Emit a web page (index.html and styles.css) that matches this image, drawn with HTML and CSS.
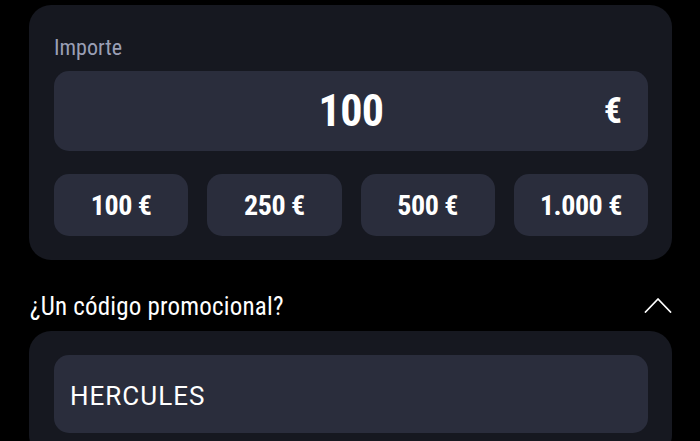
FILE: index.html
```html
<!DOCTYPE html>
<html lang="es">
<head>
<meta charset="utf-8">
<link rel="stylesheet" href="styles.css">
</head>
<body>
<main class="page">
  <section class="card amount-card">
    <div class="label">Importe</div>
    <div class="amount-input">
      <span class="spacer"></span>
      <span class="amount-value">100</span>
      <span class="amount-currency">€</span>
    </div>
    <div class="presets">
      <button class="preset">100 €</button>
      <button class="preset">250 €</button>
      <button class="preset">500 €</button>
      <button class="preset">1.000 €</button>
    </div>
  </section>

  <div class="promo-header">
    <span class="promo-title">¿Un código promocional?</span>
    <svg class="chevron" width="28" height="16" viewBox="0 0 28 16" aria-hidden="true">
      <polyline points="1.5,15 14,2 26.5,15" fill="none" stroke="#ffffff" stroke-width="1.8" stroke-linecap="round" stroke-linejoin="round"/>
    </svg>
  </div>

  <section class="card promo-card">
    <div class="promo-input">HERCULES</div>
  </section>
</main>
</body>
</html>
```
FILE: styles.css
```css
* { box-sizing: border-box; }

html, body {
  margin: 0;
  padding: 0;
  background: #000000;
  height: 100%;
  overflow: hidden;
}

body {
  font-family: "Roboto Condensed", "Roboto", "Liberation Sans", sans-serif;
  color: #ffffff;
}

.page {
  width: 643px;
  margin-left: 29px;
  padding-top: 5px;
}

.card {
  background: #161820;
  border-radius: 22px;
  padding: 0 24px 0 25px;
}

.amount-card {
  padding-top: 28px;
  padding-bottom: 24px;
}

.label {
  font-size: 22px;
  line-height: 30px;
  color: #9a9fb5;
  margin-bottom: 8px;
}

.amount-input {
  height: 80px;
  background: #2a2d3c;
  border-radius: 15px;
  display: grid;
  grid-template-columns: 1fr auto 1fr;
  align-items: center;
  padding: 0 26px 0 26px;
}

.amount-value {
  font-size: 44px;
  font-weight: 700;
  line-height: 1;
  letter-spacing: -0.5px;
}

.amount-currency {
  justify-self: end;
  font-size: 36px;
  font-weight: 700;
  line-height: 1;
}

.presets {
  margin-top: 23px;
  display: grid;
  grid-template-columns: repeat(4, 1fr);
  gap: 19px;
}

.preset {
  height: 62px;
  border: none;
  border-radius: 15px;
  background: #2a2d3c;
  color: #ffffff;
  font-family: inherit;
  font-size: 28px;
  font-weight: 700;
  letter-spacing: -0.5px;
  padding: 0;
}

.promo-header {
  display: flex;
  justify-content: space-between;
  align-items: flex-start;
  padding: 33px 0 10px 1px;
  height: 71px;
}

.promo-title {
  font-size: 25px;
  line-height: 28px;
  letter-spacing: 0.2px;
}

.chevron {
  margin-top: 4px;
  margin-right: 0;
}

.promo-card {
  padding-top: 24px;
  padding-bottom: 24px;
  border-radius: 22px;
}

.promo-input {
  height: 78px;
  background: #2a2d3c;
  border-radius: 15px;
  display: flex;
  align-items: center;
  padding-left: 16px;
  padding-top: 4px;
  font-family: "Roboto", "Liberation Sans", sans-serif;
  font-size: 26px;
  letter-spacing: 1px;
}
```
